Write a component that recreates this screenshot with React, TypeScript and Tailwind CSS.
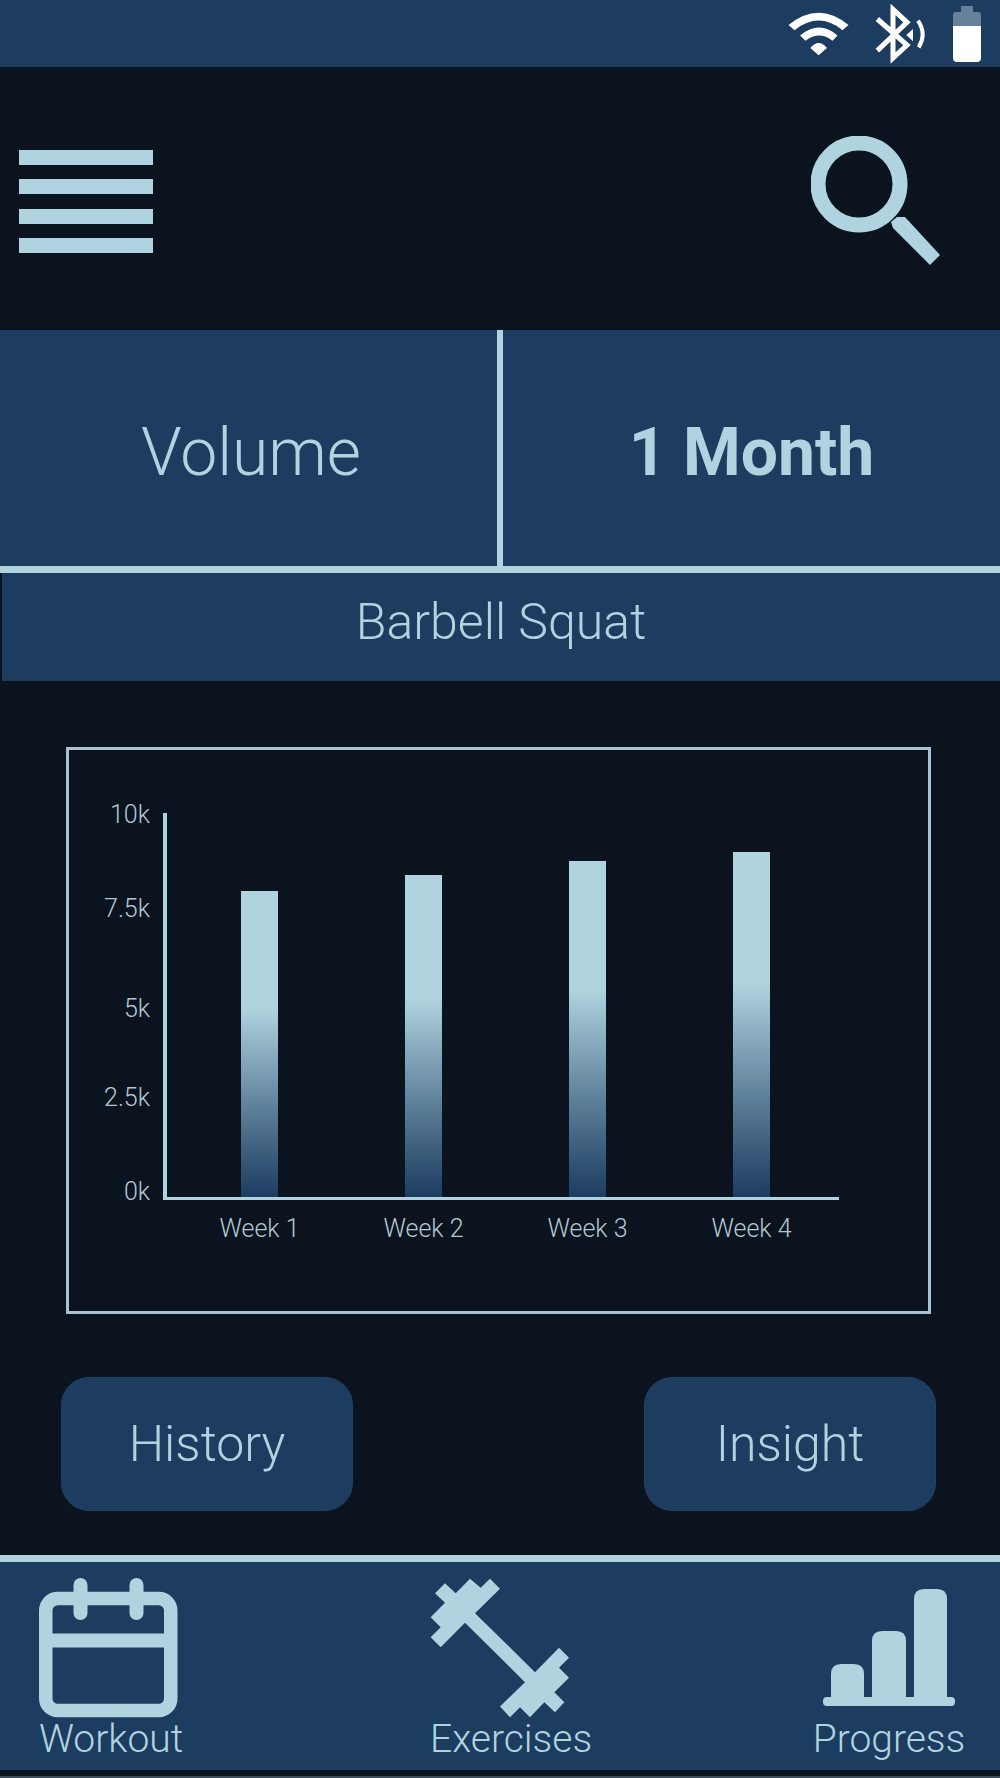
const weeks = [
  { name: "Week 1", height: 306 },
  { name: "Week 2", height: 322 },
  { name: "Week 3", height: 336 },
  { name: "Week 4", height: 345 },
];

const yLabels = [
  { text: "10k", cls: "mt-0" },
  { text: "7.5k", cls: "mt-[66px]" },
  { text: "5k", cls: "mt-[72px]" },
  { text: "2.5k", cls: "mt-[61px]" },
  { text: "0k", cls: "mt-[66px]" },
];

function StatusIcons() {
  return (
    <div className="flex items-center">
      <svg width="65" height="48" viewBox="20 30 195 145" className="mr-[22px]" fill="#fff">
        <path d="M27 75 Q118 1 208 75 L190 91 Q118 33 45 91 Z" />
        <path d="M62 107 Q120 59 175 107 L160 123 Q120 91 78 123 Z" />
        <path d="M93 145 Q118 115 143 145 L118 167 Z" />
      </svg>
      <svg width="55" height="60" viewBox="520 10 165 180" className="mr-[25px]">
        <path d="M533 55 L622 133 L580 172 L580 26 L622 65 L533 150" fill="none" stroke="#fff" strokeWidth="15" />
        <path d="M655 60 Q682 100 657 140" fill="none" stroke="#fff" strokeWidth="12" />
        <path d="M640 85 L620 103 L640 122 Z" fill="#fff" />
      </svg>
      <svg width="28" height="56" viewBox="0 0 28 56">
        <path d="M8 0 H20 V6 H25 Q28 6 28 9 V20 H0 V9 Q0 6 3 6 H8 Z" fill="#668199" />
        <path d="M0 20 H28 V52 Q28 56 24 56 H4 Q0 56 0 52 Z" fill="#fff" />
      </svg>
    </div>
  );
}

function DumbbellIcon() {
  return (
    <svg width="140" height="140" viewBox="30 23 420 419" fill="#b0d4df">
      <path d="M75 38 L107 68 L150 25 L182 52 L210 25 L240 55 L165 128 L345 305 L417 232 L447 262 L417 292 L447 322 L403 365 L433 395 L405 425 L373 395 L330 440 L300 410 L270 440 L240 408 L315 335 L135 157 L62 230 L32 200 L62 170 L32 140 L75 97 L45 68 Z" />
    </svg>
  );
}

export default function App() {
  return (
    <div className="w-[1000px] h-[1778px] bg-[#0b131e] flex flex-col font-['Roboto',sans-serif] text-[#b0d4df] overflow-hidden">
      <div className="h-[67px] bg-[#1c3d60] flex items-center justify-end pr-[19px]">
        <StatusIcons />
      </div>

      <div className="h-[263px] flex items-center justify-between pl-[19px] pr-[59px]">
        <div className="flex flex-col gap-[14.5px] w-[134px] mt-[6px]">
          <div className="h-[15px] bg-[#b0d4df]" />
          <div className="h-[15px] bg-[#b0d4df]" />
          <div className="h-[15px] bg-[#b0d4df]" />
          <div className="h-[15px] bg-[#b0d4df]" />
        </div>
        <svg width="130" height="130" viewBox="0 0 130 130" className="mt-[5px]">
          <circle cx="48" cy="48" r="41" fill="none" stroke="#b0d4df" strokeWidth="15" />
          <path d="M80 86 L86 81 L94 81 L129 119 L119 129 L82 92 Z" fill="#b0d4df" />
        </svg>
      </div>

      <div className="h-[243px] flex border-b-[7px] border-[#b0d4df]">
        <div className="w-[497px] bg-[#1c3d60] flex items-center justify-center pt-[9px] pl-[5px] font-light text-[66px]">Volume</div>
        <div className="w-[6px] bg-[#b0d4df]" />
        <div className="flex-1 bg-[#1c3d60] flex items-center justify-center pt-[9px] font-bold text-[66px]">1 Month</div>
      </div>

      <div className="h-[108px] ml-[2px] bg-[#1c3d60] flex items-center justify-center pb-[9px] font-light text-[50px]">Barbell Squat</div>

      <div className="ml-[66px] mt-[66px] w-[865px] h-[567px] border-[3px] border-[#a9c1d1] flex pt-[51px]">
        <div className="w-[81px] flex flex-col items-end text-[25px] font-light text-[#b4c8d4] leading-[28px]">
          {yLabels.map((l) => (
            <div key={l.text} className={l.cls}>{l.text}</div>
          ))}
        </div>
        <div className="ml-[13px] pt-[12px]">
          <div className="w-[676px] h-[387px] border-l-4 border-b-[3px] border-[#b0d4df] flex items-end pl-[74px] gap-[127px]">
            {weeks.map((w) => (
              <div
                key={w.name}
                className="w-[37px] bg-gradient-to-b from-[#b0d4df] from-[38%] to-[#1c3d60]"
                style={{ height: w.height }}
              />
            ))}
          </div>
          <div className="flex pl-[78px] gap-[127px] mt-[15px] text-[25px] font-light text-[#b4c8d4] leading-[28px]">
            {weeks.map((w) => (
              <div key={w.name} className="w-[37px] flex justify-center whitespace-nowrap">{w.name}</div>
            ))}
          </div>
        </div>
      </div>

      <div className="flex justify-between pl-[61px] pr-[64px] mt-[63px]">
        <div className="w-[292px] h-[134px] rounded-[28px] bg-[#1c3d60] border border-[#1f4163] flex items-center justify-center font-light text-[50px]">History</div>
        <div className="w-[292px] h-[134px] rounded-[28px] bg-[#1c3d60] border border-[#1f4163] flex items-center justify-center font-light text-[50px]">Insight</div>
      </div>

      <div className="mt-[44px] h-[215px] border-t-[7px] border-[#b0d4df] bg-[#1c3d60] flex pl-[39px] pt-[16px] font-light text-[39px] leading-[42px]">
        <div className="w-[391px] flex flex-col items-start">
          <svg width="140" height="140" viewBox="0 0 140 140" fill="#b0d4df">
            <rect x="6.75" y="20.5" width="125" height="112" rx="12" fill="none" stroke="#b0d4df" strokeWidth="13.5" />
            <rect x="7" y="55.5" width="125" height="14" />
            <rect x="34.5" y="0" width="14" height="42" rx="7" />
            <rect x="90.5" y="0" width="14" height="42" rx="7" />
          </svg>
          <div>Workout</div>
        </div>
        <div className="w-[385px] flex flex-col items-start">
          <DumbbellIcon />
          <div>Exercises</div>
        </div>
        <div className="w-[148px] flex flex-col items-center">
          <svg width="132" height="140" viewBox="0 0 132 140" fill="#b0d4df">
            <rect x="0" y="119" width="132" height="9" rx="4" />
            <path d="M8 120 V96 Q8 86 18 86 H31 Q41 86 41 96 V120 Z" />
            <path d="M49 120 V63 Q49 53 59 53 H73 Q83 53 83 63 V120 Z" />
            <path d="M91 120 V21 Q91 11 101 11 H114 Q124 11 124 21 V120 Z" />
          </svg>
          <div>Progress</div>
        </div>
      </div>

      <div className="mt-auto h-[2px] bg-[#3d4c5a]" />
    </div>
  );
}
